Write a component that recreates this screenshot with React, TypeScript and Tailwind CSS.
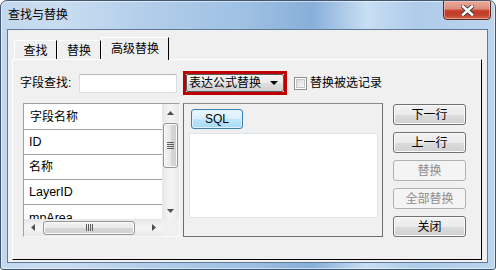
import React from "react";

const normalBtn =
  "w-[73px] h-[21px] rounded-[3px] border border-[#707070] bg-[linear-gradient(#f2f2f2_0%,#ebebeb_50%,#dddddd_51%,#cfcfcf_100%)] shadow-[inset_0_0_0_1px_#fbfbfb] flex items-center justify-center text-[12px] leading-[14px] text-black";
const disabledBtn =
  "w-[73px] h-[21px] rounded-[3px] border border-[#adb2b5] bg-[#f4f4f4] flex items-center justify-center text-[12px] leading-[14px] text-[#8d8d8d]";

function Tri({ dir }: { dir: "up" | "down" | "left" | "right" }) {
  const pts: Record<string, string> = {
    up: "0,4 7,4 3.5,0",
    down: "0,0 7,0 3.5,4",
    left: "4,0 4,7 0,3.5",
    right: "0,0 0,7 4,3.5",
  };
  const vertical = dir === "up" || dir === "down";
  return (
    <svg width={vertical ? 7 : 4} height={vertical ? 4 : 7} viewBox={vertical ? "0 0 7 4" : "0 0 4 7"}>
      <polygon points={pts[dir]} fill="#505050" />
    </svg>
  );
}

export default function App() {
  return (
    <div className="relative w-[496px] h-[270px] border border-[#41576f] rounded-t-[7px] rounded-b-[3px] bg-[linear-gradient(90deg,#c2d8ee_0%,#c9ddf1_12%,#b2cdea_30%,#9dc0e3_50%,#88afd9_63%,#c8def3_74%,#aecbea_84%,#bcd5ef_100%)] shadow-[inset_0_0_0_1px_rgba(255,255,255,0.55)] flex flex-col font-['Liberation_Sans','Noto_Sans_CJK_SC',sans-serif] text-black overflow-hidden">
      {/* title bar */}
      <div className="h-[28px] flex items-center pl-[7px] text-[12px] leading-[14px] text-black">
        查找与替换
      </div>
      {/* close button */}
      <div className="absolute top-[-1px] right-[4px] w-[48px] h-[20px] rounded-b-[4px] border border-[#5b2a22] bg-[linear-gradient(#eaaa9c_0%,#dc8f7e_42%,#c43c27_55%,#c2412c_78%,#d66a4e_100%)] shadow-[inset_0_0_0_1px_rgba(255,220,210,0.45)] flex items-center justify-center">
        <svg width="13" height="11" viewBox="0 0 13 11">
          <path d="M2 1.5 L11 9.5 M11 1.5 L2 9.5" stroke="#3d3d3d" strokeWidth="4.4" strokeLinecap="square" />
          <path d="M2 1.5 L11 9.5 M11 1.5 L2 9.5" stroke="#ffffff" strokeWidth="2.6" strokeLinecap="square" />
        </svg>
      </div>

      {/* client area */}
      <div className="ml-[6px] mr-[7px] h-[234px] border border-[#5f7a98] bg-[#f0f0f0] flex flex-col">
        <div className="ml-[4px] mt-[7px] w-[470px] flex flex-col">
          {/* tabs */}
          <div className="relative z-10 h-[22px] flex items-end pl-[2px]">
            <div className="w-[43px] h-[19px] border-t border-l border-white border-r border-r-black flex items-center justify-center text-[12px] leading-[14px] pt-[1px]">
              查找
            </div>
            <div className="w-[44px] h-[19px] border-t border-l border-white border-r border-r-black flex items-center justify-center text-[12px] leading-[14px] pt-[1px]">
              替换
            </div>
            <div className="w-[68px] h-[23px] -mb-[1px] bg-[#f0f0f0] border-t border-l border-white border-r border-r-black flex items-start justify-center text-[12px] leading-[14px] pt-[4px]">
              高级替换
            </div>
          </div>
          {/* panel */}
          <div className="h-[201px] border-t border-l border-white border-r border-b border-r-black border-b-black bg-[#f0f0f0] flex flex-col">
            {/* row 1 */}
            <div className="mt-[11px] ml-[7px] h-[24px] flex items-center">
              <span className="w-[59px] text-[12px] leading-[14px]">字段查找:</span>
              <div className="w-[98px] h-[19px] bg-white border border-[#dadde3] border-t-[#b5b8be] rounded-[1px]" />
              <div className="ml-[6px] w-[104px] h-[24px] border-[3px] border-[#c00000] flex">
                <div className="flex-1 border border-[#5a5a5a] rounded-[2px] bg-[linear-gradient(#f3f3f3_0%,#ebebeb_50%,#dedede_51%,#d0d0d0_100%)] flex items-center pl-[2px] pr-[5px]">
                  <span className="text-[12px] leading-[14px] flex-1">表达公式替换</span>
                  <svg width="8" height="4" viewBox="0 0 8 4">
                    <polygon points="0,0 8,0 4,4" fill="#000" />
                  </svg>
                </div>
              </div>
              <div className="ml-[7px] w-[13px] h-[13px] border border-[#8e8f8f] bg-white p-[1px]">
                <div className="w-full h-full border border-[#c4c6c8] bg-[linear-gradient(135deg,#d7d9db,#f8f8f8)]" />
              </div>
              <span className="ml-[3px] text-[12px] leading-[14px]">替换被选记录</span>
            </div>

            {/* row 2 */}
            <div className="mt-[8px] ml-[10px] flex items-start">
              {/* list box */}
              <div className="w-[157px] h-[134px] border border-[#a0a0a0] border-r-[#f8f8f8] border-b-[#f8f8f8] bg-white flex flex-col">
                <div className="flex h-[115px]">
                  <div className="w-[138px] h-[115px] overflow-hidden flex flex-col">
                    <div className="h-[26px] shrink-0 border-b border-[#a0a0a0] flex items-center pl-[6px] text-[12px] leading-[14px]">
                      字段名称
                    </div>
                    <div className="h-[25px] shrink-0 border-b border-[#a0a0a0] flex items-center pl-[5px] text-[12.5px] leading-[14px]">
                      ID
                    </div>
                    <div className="h-[25px] shrink-0 border-b border-[#a0a0a0] flex items-center pl-[5px] text-[12px] leading-[14px]">
                      名称
                    </div>
                    <div className="h-[25px] shrink-0 border-b border-[#a0a0a0] flex items-center pl-[5px] text-[12.5px] leading-[14px]">
                      LayerID
                    </div>
                    <div className="h-[25px] shrink-0 flex items-center pl-[5px] text-[12.5px] leading-[14px]">
                      mpArea
                    </div>
                  </div>
                  {/* vertical scrollbar */}
                  <div className="w-[17px] h-[115px] bg-[linear-gradient(90deg,#e6e6e6,#f3f3f3_40%,#f3f3f3_60%,#e9e9e9)] flex flex-col">
                    <div className="h-[17px] flex items-center justify-center">
                      <Tri dir="up" />
                    </div>
                    <div className="flex-1 flex flex-col">
                      <div className="mt-[2px] ml-[1px] w-[15px] h-[45px] rounded-[3px] border border-[#969696] bg-[linear-gradient(90deg,#f4f4f4_0%,#e8e8e8_50%,#d8d8d8_51%,#cfcfcf_100%)] shadow-[inset_0_0_0_1px_#fafafa] flex flex-col items-center justify-center gap-[1px]">
                        <div className="w-[7px] h-[1px] bg-[#5c5c5c]" />
                        <div className="w-[7px] h-[1px] bg-[#5c5c5c]" />
                        <div className="w-[7px] h-[1px] bg-[#5c5c5c]" />
                        <div className="w-[7px] h-[1px] bg-[#5c5c5c]" />
                      </div>
                    </div>
                    <div className="h-[17px] flex items-center justify-center">
                      <Tri dir="down" />
                    </div>
                  </div>
                </div>
                <div className="flex h-[17px]">
                  {/* horizontal scrollbar */}
                  <div className="w-[138px] h-[17px] bg-[linear-gradient(#e6e6e6,#f3f3f3_40%,#f3f3f3_60%,#e9e9e9)] flex items-center">
                    <div className="w-[17px] h-[17px] flex items-center justify-center">
                      <Tri dir="left" />
                    </div>
                    <div className="flex-1 h-[17px] flex items-center">
                      <div className="ml-[2px] w-[92px] h-[14px] rounded-[3px] border border-[#969696] bg-[linear-gradient(#f4f4f4_0%,#e8e8e8_50%,#d8d8d8_51%,#cfcfcf_100%)] shadow-[inset_0_0_0_1px_#fafafa] flex items-center justify-center gap-[1px]">
                        <div className="w-[1px] h-[7px] bg-[#5c5c5c]" />
                        <div className="w-[1px] h-[7px] bg-[#5c5c5c]" />
                        <div className="w-[1px] h-[7px] bg-[#5c5c5c]" />
                        <div className="w-[1px] h-[7px] bg-[#5c5c5c]" />
                      </div>
                    </div>
                    <div className="w-[17px] h-[17px] flex items-center justify-center">
                      <Tri dir="right" />
                    </div>
                  </div>
                  <div className="w-[17px] h-[17px] bg-[#f0f0f0]" />
                </div>
              </div>

              {/* right panel */}
              <div className="ml-[3px] w-[200px] h-[134px] border border-[#6e6e6e] border-t-[#8a8a8a] bg-[#f0f0f0] flex flex-col">
                <div className="ml-[7px] mt-[5px] w-[52px] h-[20px] rounded-[3px] border border-[#3c7fb1] bg-[linear-gradient(#eaf6fd_0%,#d9f0fc_50%,#bee6fd_51%,#a7d9f5_100%)] shadow-[inset_0_0_0_1px_#dff2fd] flex items-center justify-center text-[12px] leading-[14px]">
                  SQL
                </div>
                <div className="ml-[5px] mt-[4px] w-[189px] h-[85px] bg-white border border-[#dfe3ea]" />
              </div>

              {/* buttons */}
              <div className="ml-[10px] mt-[1px] flex flex-col gap-[7px]">
                <div className={normalBtn}>下一行</div>
                <div className={normalBtn}>上一行</div>
                <div className={disabledBtn}>替换</div>
                <div className={disabledBtn}>全部替换</div>
                <div className={normalBtn}>关闭</div>
              </div>
            </div>
          </div>
        </div>
      </div>
    </div>
  );
}
